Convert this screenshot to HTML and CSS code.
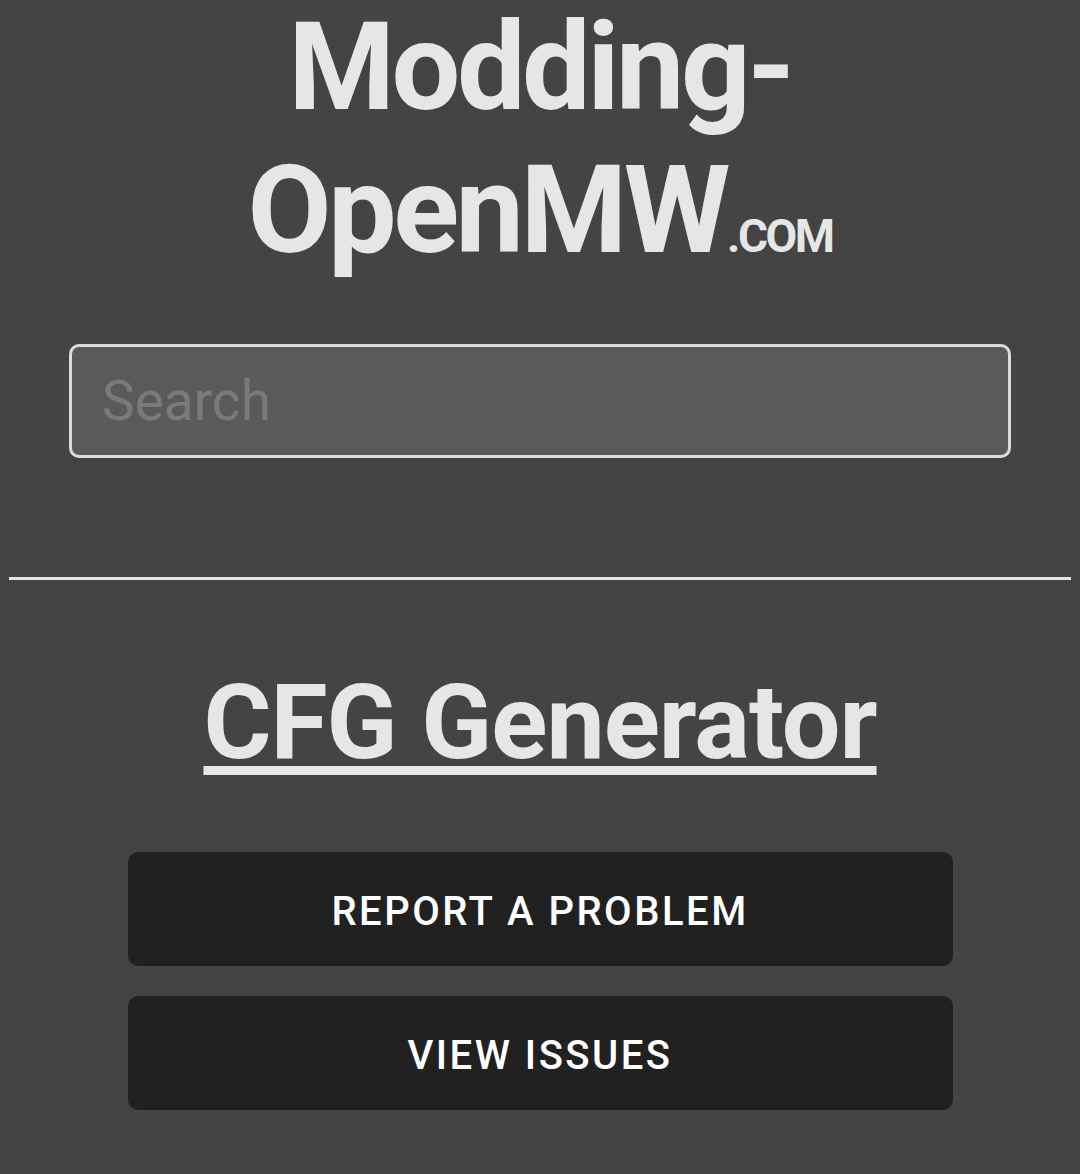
FILE: index.html
```html
<!DOCTYPE html>
<html lang="en">
<head>
<meta charset="utf-8">
<title>Modding-OpenMW.com – CFG Generator</title>
<link rel="stylesheet" href="styles.css">
</head>
<body>
<header class="site-header">
  <h1 class="site-title">Modding-OpenMW<span class="tld">.com</span></h1>
  <form class="search-form">
    <input class="search-input" type="text" placeholder="Search">
  </form>
</header>
<hr class="divider">
<main class="content">
  <h2 class="page-title"><a href="#">CFG Generator</a></h2>
  <div class="actions">
    <a class="btn" href="#">Report a problem</a>
    <a class="btn" href="#">View issues</a>
  </div>
</main>
</body>
</html>
```
FILE: styles.css
```css
html, body {
  margin: 0;
  padding: 0;
}
body {
  background: #444444;
  color: #e6e6e6;
  font-family: Roboto, "Liberation Sans", sans-serif;
  overflow: hidden;
}
.site-header {
  display: flex;
  flex-direction: column;
  align-items: center;
}
.site-title {
  margin: -4px 0 0;
  width: 640px;
  font-size: 122px;
  font-weight: 700;
  line-height: normal;
  text-align: center;
  letter-spacing: -3.5px;
}
.tld {
  font-size: 46px;
  letter-spacing: -2.5px;
  text-transform: uppercase;
}
.search-form {
  margin-top: 62px;
  width: 942px;
}
.search-input {
  box-sizing: border-box;
  width: 100%;
  height: 114px;
  border: 3px solid #dcdcdc;
  border-radius: 10px;
  background: #5a5a5a;
  padding: 0 30px;
  font-family: Roboto, sans-serif;
  font-size: 55px;
  color: #e6e6e6;
  outline: none;
}
.search-input::placeholder {
  color: #7a7a7a;
}
.divider {
  margin: 119px 9px 0;
  border: 0;
  height: 3px;
  background: #e6e6e6;
}
.content {
  display: flex;
  flex-direction: column;
  align-items: center;
}
.page-title {
  margin: 82px 0 0;
  font-size: 104px;
  font-weight: 700;
  line-height: normal;
  letter-spacing: -1px;
}
.page-title a {
  color: #e6e6e6;
  text-decoration: underline;
  text-decoration-thickness: 9px;
  text-underline-offset: 8px;
}
.actions {
  margin-top: 69px;
  width: 825px;
  display: flex;
  flex-direction: column;
  gap: 30px;
}
.btn {
  display: flex;
  align-items: center;
  justify-content: center;
  height: 114px;
  padding-top: 4px;
  box-sizing: border-box;
  border-radius: 10px;
  background: #212121;
  color: #ffffff;
  text-decoration: none;
  text-transform: uppercase;
  font-size: 40px;
  font-weight: 500;
  letter-spacing: 2.5px;
}
```
